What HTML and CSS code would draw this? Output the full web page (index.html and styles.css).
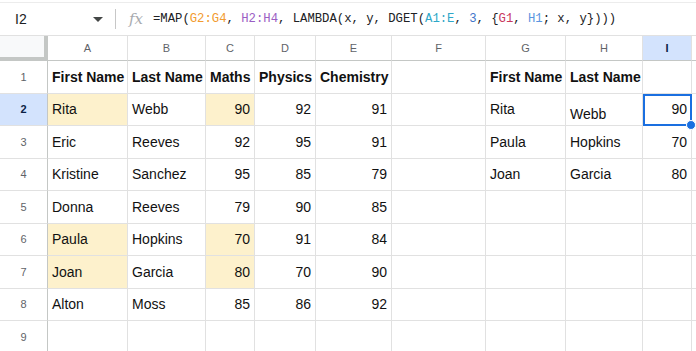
FILE: index.html
```
<!DOCTYPE html>
<html lang="en">
<head>
  <meta charset="UTF-8" />
  <title>Sheet</title>
  <link rel="stylesheet" href="styles.css">
</head>
<body>
  <div class="formula-bar">
    <div class="name-box">I2</div>
    <div class="caret"></div>
    <div class="sep"></div>
    <div class="fx">fx</div>
    <div class="formula">=MAP(<span class="f-orange">G2:G4</span>, <span class="f-purple">H2:H4</span>, LAMBDA(x, y, DGET(<span class="f-teal">A1:E</span>, <span class="f-num">3</span>, {<span class="f-red">G1</span>, <span class="f-blue">H1</span>; x, y})))</div>
  </div>

  <div class="sheet">
    <!-- column headers -->
    <div class="corner"></div>
    <div class="ch">A</div>
    <div class="ch">B</div>
    <div class="ch">C</div>
    <div class="ch">D</div>
    <div class="ch">E</div>
    <div class="ch">F</div>
    <div class="ch">G</div>
    <div class="ch">H</div>
    <div class="ch ch-active">I</div>
    <div class="ch"></div>

    <!-- row 1 -->
    <div class="rh">1</div>
    <div class="c b">First Name</div>
    <div class="c b">Last Name</div>
    <div class="c b">Maths</div>
    <div class="c b">Physics</div>
    <div class="c b">Chemistry</div>
    <div class="c"></div>
    <div class="c b">First Name</div>
    <div class="c b">Last Name</div>
    <div class="c"></div>
    <div class="c"></div>

    <!-- row 2 -->
    <div class="rh rh-active">2</div>
    <div class="c hl">Rita</div>
    <div class="c">Webb</div>
    <div class="c num hl">90</div>
    <div class="c num">92</div>
    <div class="c num">91</div>
    <div class="c"></div>
    <div class="c">Rita</div>
    <div class="c low">Webb</div>
    <div class="c num sel">90<span class="handle"></span></div>
    <div class="c"></div>

    <!-- row 3 -->
    <div class="rh">3</div>
    <div class="c">Eric</div>
    <div class="c">Reeves</div>
    <div class="c num">92</div>
    <div class="c num">95</div>
    <div class="c num">91</div>
    <div class="c"></div>
    <div class="c">Paula</div>
    <div class="c">Hopkins</div>
    <div class="c num">70</div>
    <div class="c"></div>

    <!-- row 4 -->
    <div class="rh">4</div>
    <div class="c">Kristine</div>
    <div class="c">Sanchez</div>
    <div class="c num">95</div>
    <div class="c num">85</div>
    <div class="c num">79</div>
    <div class="c"></div>
    <div class="c">Joan</div>
    <div class="c">Garcia</div>
    <div class="c num">80</div>
    <div class="c"></div>

    <!-- row 5 -->
    <div class="rh">5</div>
    <div class="c">Donna</div>
    <div class="c">Reeves</div>
    <div class="c num">79</div>
    <div class="c num">90</div>
    <div class="c num">85</div>
    <div class="c"></div>
    <div class="c"></div>
    <div class="c"></div>
    <div class="c"></div>
    <div class="c"></div>

    <!-- row 6 -->
    <div class="rh">6</div>
    <div class="c hl">Paula</div>
    <div class="c">Hopkins</div>
    <div class="c num hl">70</div>
    <div class="c num">91</div>
    <div class="c num">84</div>
    <div class="c"></div>
    <div class="c"></div>
    <div class="c"></div>
    <div class="c"></div>
    <div class="c"></div>

    <!-- row 7 -->
    <div class="rh">7</div>
    <div class="c hl">Joan</div>
    <div class="c">Garcia</div>
    <div class="c num hl">80</div>
    <div class="c num">70</div>
    <div class="c num">90</div>
    <div class="c"></div>
    <div class="c"></div>
    <div class="c"></div>
    <div class="c"></div>
    <div class="c"></div>

    <!-- row 8 -->
    <div class="rh">8</div>
    <div class="c">Alton</div>
    <div class="c">Moss</div>
    <div class="c num">85</div>
    <div class="c num">86</div>
    <div class="c num">92</div>
    <div class="c"></div>
    <div class="c"></div>
    <div class="c"></div>
    <div class="c"></div>
    <div class="c"></div>

    <!-- row 9 -->
    <div class="rh">9</div>
    <div class="c"></div>
    <div class="c"></div>
    <div class="c"></div>
    <div class="c"></div>
    <div class="c"></div>
    <div class="c"></div>
    <div class="c"></div>
    <div class="c"></div>
    <div class="c"></div>
    <div class="c"></div>
  </div>
</body>
</html>
```

FILE: styles.css
```
body {
  margin: 0;
  background: #ffffff;
  font-family: 'Liberation Sans', Arial, sans-serif;
  color: #202124;
  overflow: hidden;
}

.formula-bar {
  box-sizing: border-box;
  border-top: 1px solid #ececec;
  margin-top: 2px;
  border-bottom: 1px solid #e1e1e1;
  height: 34px;
  display: flex;
  align-items: center;
}

.name-box {
  width: 78px;
  padding-left: 15px;
  font-size: 14px;
  color: #202124;
}

.caret {
  width: 0;
  height: 0;
  border-left: 5px solid transparent;
  border-right: 5px solid transparent;
  border-top: 5px solid #444746;
  margin-right: 12px;
}

.sep {
  width: 1px;
  height: 20px;
  background: #c7c7c7;
  margin-right: 13px;
}

.fx {
  font-family: 'DejaVu Serif', serif;
  font-style: italic;
  font-size: 15px;
  color: #a8abaf;
  width: 24px;
}

.formula {
  font-family: 'Liberation Mono', monospace;
  font-size: 12.25px;
  color: #202124;
  white-space: nowrap;
}

.f-orange { color: #f29b2f; }
.f-purple { color: #9a5ec4; }
.f-teal { color: #2ea7c8; }
.f-num { color: #3f75c9; }
.f-red { color: #c9375d; }
.f-blue { color: #5a95e0; }

.sheet {
  display: grid;
  grid-template-columns: 48px 80px 78px 49px 61px 76px 94px 80px 77px 49px 1fr;
  grid-template-rows: 25px repeat(9, 32.5px);
}

.sheet > div {
  box-sizing: border-box;
}

.corner {
  background: #f8f9fa;
  border-right: 4px solid #c4c7c5;
  border-bottom: 4px solid #c4c7c5;
}

.ch {
  border-right: 1px solid #e1e1e1;
  border-bottom: 1px solid #c4c7c5;
  display: flex;
  align-items: center;
  justify-content: center;
  font-size: 11px;
  color: #5f6368;
}

.ch-active {
  background: #d3e3fd;
  color: #0b1f44;
  font-weight: bold;
}

.rh {
  border-right: 1px solid #c4c7c5;
  border-bottom: 1px solid #e1e1e1;
  display: flex;
  align-items: center;
  justify-content: center;
  font-size: 11px;
  color: #5f6368;
}

.rh-active {
  background: #d3e3fd;
  color: #0b1f44;
  font-weight: bold;
}

.c {
  border-right: 1px solid #e1e1e1;
  border-bottom: 1px solid #e1e1e1;
  display: flex;
  align-items: center;
  padding: 0 4px;
  font-size: 14px;
  color: #111111;
  white-space: nowrap;
  position: relative;
}

.b {
  font-weight: bold;
}

.num {
  justify-content: flex-end;
}

.hl {
  background: #fdf1cc;
}

.low {
  align-items: flex-end;
  padding-bottom: 3px;
}

.sel {
  outline: 2px solid #1a6fe0;
  outline-offset: -2px;
  z-index: 1;
}

.handle {
  position: absolute;
  right: -5px;
  bottom: -5px;
  width: 10px;
  height: 10px;
  border-radius: 50%;
  background: #1a6fe0;
  border: 1px solid #ffffff;
  box-sizing: border-box;
}
```
